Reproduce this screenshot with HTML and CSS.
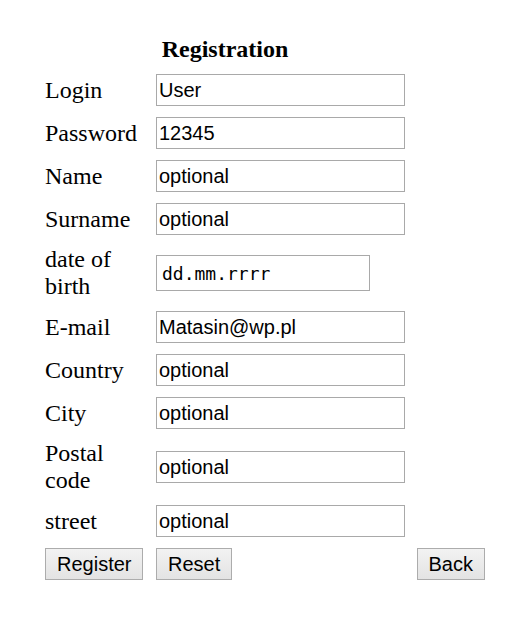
FILE: index.html
```html
<!DOCTYPE html>
<html lang="en">
<head>
<meta charset="utf-8">
<title>Registration</title>
<link rel="stylesheet" href="styles.css">
</head>
<body>
<form class="form">
  <h1 class="title">Registration</h1>

  <label class="label" for="login">Login</label>
  <div class="field"><input class="input" id="login" type="text" value="User"></div>
  <div class="spare"></div>

  <label class="label" for="pass">Password</label>
  <div class="field"><input class="input" id="pass" type="text" value="12345"></div>
  <div class="spare"></div>

  <label class="label" for="name">Name</label>
  <div class="field"><input class="input" id="name" type="text" value="optional"></div>
  <div class="spare"></div>

  <label class="label" for="surname">Surname</label>
  <div class="field"><input class="input" id="surname" type="text" value="optional"></div>
  <div class="spare"></div>

  <label class="label" for="dob">date of<br>birth</label>
  <div class="field tall"><input class="input date" id="dob" type="text" value="dd.mm.rrrr"></div>
  <div class="spare"></div>

  <label class="label" for="email">E-mail</label>
  <div class="field"><input class="input" id="email" type="text" value="Matasin@wp.pl"></div>
  <div class="spare"></div>

  <label class="label" for="country">Country</label>
  <div class="field"><input class="input" id="country" type="text" value="optional"></div>
  <div class="spare"></div>

  <label class="label" for="city">City</label>
  <div class="field"><input class="input" id="city" type="text" value="optional"></div>
  <div class="spare"></div>

  <label class="label" for="postal">Postal<br>code</label>
  <div class="field tall"><input class="input" id="postal" type="text" value="optional"></div>
  <div class="spare"></div>

  <label class="label" for="street">street</label>
  <div class="field"><input class="input" id="street" type="text" value="optional"></div>
  <div class="spare"></div>

  <div class="cell"><button class="btn" type="button">Register</button></div>
  <div class="cell"><button class="btn" type="button">Reset</button></div>
  <div class="cell end"><button class="btn" type="button">Back</button></div>
</form>
</body>
</html>
```

FILE: styles.css
```css
html, body {
  margin: 0;
  padding: 0;
  background: #ffffff;
}

body {
  font-family: "Liberation Serif", "Times New Roman", serif;
  color: #000000;
}

.form {
  display: grid;
  grid-template-columns: 111px 249px 80px;
  grid-auto-rows: minmax(40px, auto);
  row-gap: 3px;
  padding: 27px 0 0 45px;
  margin: 0;
}

.title {
  grid-column: 1 / span 3;
  margin: 0;
  padding: 4px 80px 0 0;
  font-size: 24px;
  font-weight: bold;
  line-height: 26px;
  text-align: center;
  align-self: center;
}

.label {
  font-size: 24px;
  line-height: 27px;
  align-self: center;
  white-space: nowrap;
}

.field,
.spare,
.cell {
  display: flex;
  align-items: center;
  height: 40px;
}

.field.tall {
  height: 62px;
}

.end {
  justify-content: flex-end;
}

.input {
  box-sizing: border-box;
  width: 249px;
  height: 32px;
  margin: 0;
  padding: 0 2px;
  border: 1px solid #a9a9a9;
  border-radius: 0;
  background: #ffffff;
  font-family: "Liberation Sans", Arial, sans-serif;
  font-size: 20px;
  color: #000000;
  outline: none;
}

.date {
  width: 214px;
  height: 36px;
  padding: 0 5px;
  font-family: "DejaVu Sans Mono", "Liberation Mono", monospace;
  font-size: 18px;
}

.btn {
  box-sizing: border-box;
  height: 32px;
  margin: 0;
  padding: 0 11px;
  border: 1px solid #acacac;
  border-radius: 0;
  background: linear-gradient(to bottom, #f2f2f2, #e3e3e3);
  font-family: "Liberation Sans", Arial, sans-serif;
  font-size: 20px;
  color: #000000;
  line-height: 30px;
}
```
